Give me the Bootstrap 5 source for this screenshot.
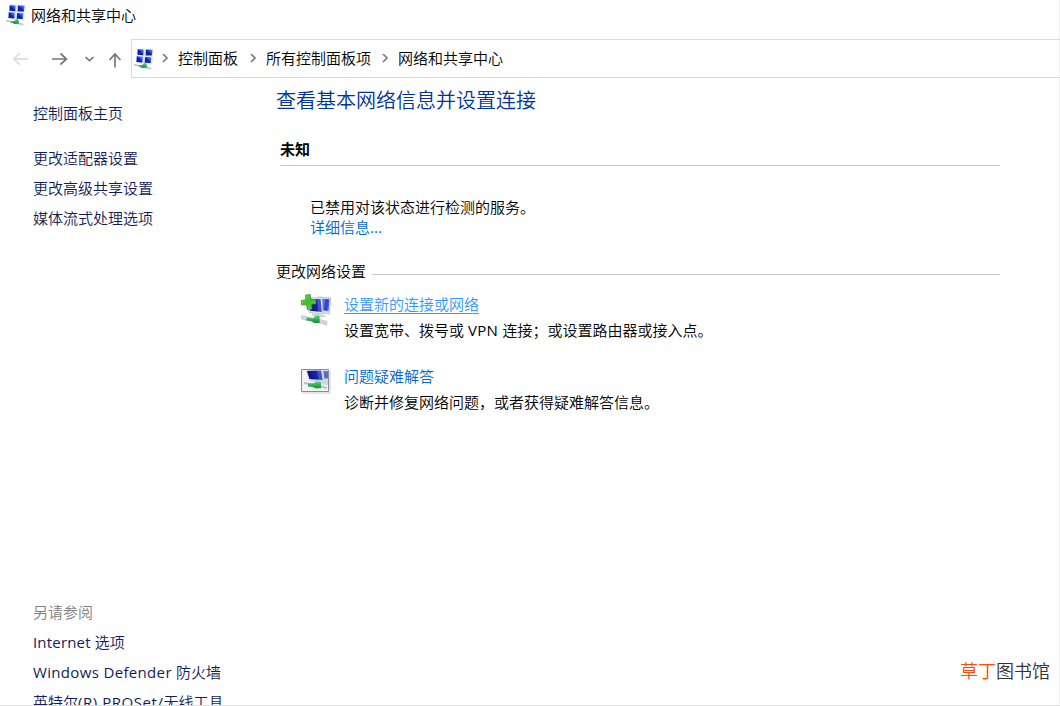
<!DOCTYPE html>
<html lang="zh-CN">
<head>
<meta charset="utf-8">
<meta name="viewport" content="width=device-width, initial-scale=1">
<title>网络和共享中心</title>
<link href="https://cdn.jsdelivr.net/npm/bootstrap@5.3.0/dist/css/bootstrap.min.css" rel="stylesheet">
<style>
body{font:400 15px/20px "Open Sans","Noto Sans CJK SC DemiLight","Noto Sans CJK SC",sans-serif;color:#000;background:#fff}
.window-frame{width:1060px;height:706px;border-right:1px solid #f0f0f0;border-bottom:1px solid #dcdcdc}
.title-bar{height:39px;padding:5px 0 0 5px}
.title-bar svg{margin-top:-1px}
.title-bar span{margin-left:4px}
.nav-row{height:39px;margin-right:-1px}
.arrows{width:131px}
.arrows svg{display:block}
.address{border:1px solid #d9d9d9;border-right:0;padding-left:1px}
.address span{position:relative;top:-1px}
.address .sep{width:9px;margin:0 8px 0 11px}
.address .sep:nth-child(2){margin:0 8px 0 6px}
.address .sep:last-of-type{margin-left:10px}
a{text-decoration:none;color:#0066cc}
.side{width:276px;padding-left:33px;padding-top:25px}
.side a{color:#151c55;display:block;height:30px;white-space:nowrap}
.side .home-link{height:45px}
.see-also{height:103px;overflow:hidden}
.side a.muted-label{color:#808080}
.track-s{letter-spacing:.18px}
.track-m{letter-spacing:.34px}
.track-l{letter-spacing:.55px}
h1{font-size:20px;line-height:26px;color:#003399;font-weight:400;margin:10px 0 0}
.main-area{width:724px}
.profile-name{margin:25px 0 0 4px;height:27px;position:relative}
.profile-name b{font-family:"Noto Sans CJK SC",sans-serif;font-weight:700}
.profile-name{border-bottom:1px solid #c8c8c8}
.status{padding:31px 0 0 34px}
.rule{height:1px;background:#c8c8c8;margin:6px 0 0 6px}
.section-title{margin-top:24px}
.task{padding-left:24px;margin-top:26px}
.section-title + .task{margin-top:13px}
.task .icon-box{width:32px;margin-right:12px}
.desc{margin-top:6px}
.hot{color:#3399ff;text-decoration:underline;text-underline-offset:3px;text-decoration-thickness:1px}
.brand{font-size:18px;line-height:24px;color:#333;right:9px;bottom:22px}
.brand span{color:#ff4c0b}
</style>
</head>
<body class="overflow-hidden">
<svg width="0" height="0" class="position-absolute">
<defs>
<linearGradient id="screen" x1="0" y1="1" x2="1" y2="0"><stop offset="0" stop-color="#1a2f9e"/><stop offset=".45" stop-color="#0b1c9c"/><stop offset=".6" stop-color="#2546cc"/><stop offset="1" stop-color="#7093f0"/></linearGradient>
<linearGradient id="bigscreen" x1="0" y1=".1" x2="1" y2="0"><stop offset="0" stop-color="#0c1170"/><stop offset=".6" stop-color="#1a23a8"/><stop offset=".72" stop-color="#4656d0"/><stop offset="1" stop-color="#3445cc"/></linearGradient>
<linearGradient id="backscreen" x1="0" y1="0" x2="1" y2=".2"><stop offset="0" stop-color="#8a9bf0"/><stop offset=".5" stop-color="#5a6ee8"/><stop offset=".7" stop-color="#2a36c4"/><stop offset="1" stop-color="#5064dd"/></linearGradient>
<linearGradient id="plus" x1="0" y1="0" x2="1" y2="1"><stop offset="0" stop-color="#79d957"/><stop offset=".5" stop-color="#42b82e"/><stop offset="1" stop-color="#6fe04b"/></linearGradient>
<linearGradient id="plug" x1="0" y1="0" x2="0" y2="1"><stop offset="0" stop-color="#57d37c"/><stop offset="1" stop-color="#079335"/></linearGradient>
<symbol id="network" viewBox="0 0 22 22">
<path d="m4 .5 8 .3h8.500L19 16.500l-8-.5L3 15z" fill="#dde5f7"/>
<path d="m4.700 1.200 6 .3-.4 5.700-5.900-.5z" fill="url(#screen)"/>
<path d="m13 1.500 6.500.2-.7 5.900-6.200-.2z" fill="url(#screen)"/>
<path d="m3.800 8.300 6 .5-.4 5.800-6-.7z" fill="url(#screen)"/>
<path d="m12.200 9 6.200.2-.8 5.900-6-.4z" fill="url(#screen)"/>
<path d="m1.300 15.800 5 1.200 6 1.200 6.200 1.500-.5 1.800-6.500-1.500-10.500-2.500z" fill="#c3c9c5"/>
<path d="m4.500 17.500 4.500-.5 2.500-2 2 .4.500 4-4.500.5z" fill="url(#plug)"/>
</symbol>
</defs>
</svg>
<div class="window-frame d-flex flex-column position-relative">
<header class="title-bar d-flex"><svg width="22" height="22"><use href="#network"/></svg><span>网络和共享中心</span></header>
<nav class="nav-row d-flex">
<div class="arrows">
<svg width="131" height="39" fill="none" stroke="#777" stroke-width="1.7">
<path d="M28 20H14m6-6-6 6 6 6" stroke="#d9d9d9" stroke-width="1.5"/>
<path d="M52 20h14.500m-6-5.500 6 5.500-6 5.500"/>
<path d="m85.500 18 4 3.700 4-3.700"/>
<path d="M115 28.500V15m-5.500 6 5.500-6 5.500 6"/>
</svg>
</div>
<div class="address d-flex align-items-center flex-fill">
<svg width="22" height="22"><use href="#network"/></svg>
<svg class="sep" width="9" height="10" fill="none" stroke="#777" stroke-width="1.6"><path d="m2 0 4 4-4 4"/></svg><span>控制面板</span>
<svg class="sep" width="9" height="10" fill="none" stroke="#777" stroke-width="1.6"><path d="m2 0 4 4-4 4"/></svg><span>所有控制面板项</span>
<svg class="sep" width="9" height="10" fill="none" stroke="#777" stroke-width="1.6"><path d="m2 0 4 4-4 4"/></svg><span>网络和共享中心</span>
</div>
</nav>
<div class="d-flex flex-fill">
<aside class="side d-flex flex-column justify-content-between">
<div><a href="#" class="home-link">控制面板主页</a><a href="#">更改适配器设置</a><a href="#">更改高级共享设置</a><a href="#">媒体流式处理选项</a></div>
<div class="see-also"><a class="muted-label">另请参阅</a><a href="#"><span class="track-s">Internet </span>选项</a><a href="#"><span class="track-m">Windows Defender </span>防火墙</a><a href="#">英特尔<span class="track-l">(R) PROSet/</span>无线工具</a></div>
</aside>
<main class="main-area">
<h1>查看基本网络信息并设置连接</h1>
<div class="profile-name"><b>未知</b></div>
<div class="status">已禁用对该状态进行检测的服务。<br><a href="#">详细信息...</a></div>
<div class="section-title d-flex align-items-center"><span>更改网络设置</span><div class="rule flex-fill"></div></div>
<div class="task d-flex">
<div class="icon-box"><svg width="32" height="33" viewBox="0 1 32 33">
<path d="m18 4 12.800.800-1.300 16.500L18 19z" fill="#d6dbe6" stroke="#aeb7cc" stroke-width=".6"/><path d="m20 5.700 9.500.6-1 11.700-8.500-1z" fill="url(#backscreen)"/>
<path d="m6 5 16-.5 1 16.500-14-1.500z" fill="#e4e8ef" stroke="#a8b0c0" stroke-width=".6"/><path d="m8 6.300 12.500-.3 1.300 13L10 17.700z" fill="url(#bigscreen)"/>
<path d="m12 20 11 1.500 4 2-7 1.500-8-2z" fill="#d4d8dc"/>
<path d="m1.500 22.500 7 1.700L18 26l9 2.400-.6 3.500-9-2.600L7 27l-5.500-1z" fill="#d5d9d8" stroke="#a9b1ac" stroke-width=".5"/>
<path d="m6.500 24.500 6.500 1 3-3 3.500.2.300 7-5 .5-3.500-2-5-.7z" fill="url(#plug)"/>
<path d="m5.500 2 4.700-.5.8 4.800 4.500.2.500 4.300-4.500.4.500 5-4.700.3-.8-4.700-4.800.2-.5-4.500 4.700-.7z" fill="url(#plus)" stroke="#37972b" stroke-width=".7"/>
</svg></div>
<div><a href="#" class="hot">设置新的连接或网络</a><div class="desc">设置宽带、拨号或 <span class="track-m">VPN </span>连接；或设置路由器或接入点。</div></div>
</div>
<div class="task d-flex">
<div class="icon-box"><svg width="32" height="32" viewBox="0 0 32 32">
<path d="M2 27h28V5" fill="none" stroke="#ddd" stroke-width="1.500"/>
<path d="M1.500 3.500h27v22h-27z" fill="#f2f4f4" stroke="#8a8e92"/>
<path d="m6 4 22 .5v15L9 14.500z" fill="#d0d6df"/><path d="m7 5 14-.5 1.500 9.500-13-1z" fill="url(#bigscreen)"/><path d="m23.500 5 4.500.2v7l-3.500.5z" fill="#5669d4"/>
<path d="m4 17 10 1.500 13 3.500" fill="none" stroke="#b8c1bb" stroke-width="2"/>
<path d="m8 17.500 6-.3 2.500-1.700 4.500.4v6l-5 .6-3-1.500-5-.5z" fill="url(#plug)"/>
</svg></div>
<div><a href="#">问题疑难解答</a><div class="desc">诊断并修复网络问题，或者获得疑难解答信息。</div></div>
</div>
</main>
</div>
<div class="brand position-absolute"><span>草丁</span>图书馆</div>
</div>
<script src="https://cdn.jsdelivr.net/npm/bootstrap@5.3.0/dist/js/bootstrap.bundle.min.js"></script>
</body>
</html>
